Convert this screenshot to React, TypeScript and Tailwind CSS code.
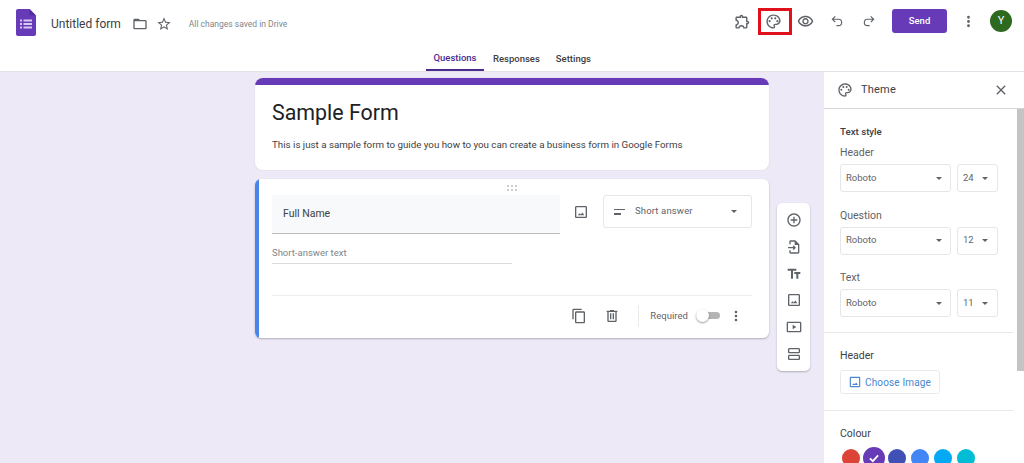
import type { ReactNode } from "react";

const paths = {
  folder: "M20 6h-8l-2-2H4c-1.1 0-1.99.9-1.99 2L2 18c0 1.1.9 2 2 2h16c1.1 0 2-.9 2-2V8c0-1.1-.9-2-2-2zm0 12H4V8h16v10z",
  star: "M22 9.24l-7.19-.62L12 2 9.19 8.63 2 9.24l5.46 4.73L5.82 21 12 17.27 18.18 21l-1.63-7.03L22 9.24zM12 15.4l-3.76 2.27 1-4.28-3.32-2.88 4.38-.38L12 6.1l1.71 4.04 4.38.38-3.32 2.88 1 4.28L12 15.4z",
  addon: "M10.5 4.5c.28 0 .5.22.5.5v2h6v6h2c.28 0 .5.22.5.5s-.22.5-.5.5h-2v6h-2.12c-.68-1.75-2.39-3-4.38-3s-3.7 1.25-4.38 3H4v-2.12c1.75-.68 3-2.39 3-4.38 0-1.99-1.24-3.7-2.99-4.38L4 7h6V5c0-.28.22-.5.5-.5m0-2C9.12 2.5 8 3.62 8 5H4c-1.1 0-1.99.9-1.99 2v3.8h.29c1.49 0 2.7 1.21 2.7 2.7s-1.21 2.7-2.7 2.7H2V20c0 1.1.9 2 2 2h3.8v-.3c0-1.49 1.21-2.7 2.7-2.7s2.7 1.21 2.7 2.7v.3H17c1.1 0 2-.9 2-2v-4c1.38 0 2.5-1.12 2.5-2.5S20.38 11 19 11V7c0-1.1-.9-2-2-2h-4c0-1.38-1.12-2.5-2.5-2.5z",
  palette: "M12 22C6.49 22 2 17.51 2 12S6.49 2 12 2s10 4.04 10 9c0 3.31-2.69 6-6 6h-1.77c-.28 0-.5.22-.5.5 0 .12.05.23.13.33.41.47.64 1.06.64 1.67A2.5 2.5 0 0 1 12 22zm0-18c-4.41 0-8 3.59-8 8s3.59 8 8 8c.28 0 .5-.22.5-.5a.54.54 0 0 0-.14-.35c-.41-.46-.63-1.05-.63-1.65a2.5 2.5 0 0 1 2.5-2.5H16c2.21 0 4-1.79 4-4 0-3.86-3.59-7-8-7zM6.5 10a1.5 1.5 0 1 0 0 3 1.5 1.5 0 0 0 0-3zM9.5 6a1.5 1.5 0 1 0 0 3 1.5 1.5 0 0 0 0-3zM14.5 6a1.5 1.5 0 1 0 0 3 1.5 1.5 0 0 0 0-3zM17.5 10a1.5 1.5 0 1 0 0 3 1.5 1.5 0 0 0 0-3z",
  eye: "M12 6c3.79 0 7.17 2.13 8.82 5.5C19.17 14.87 15.79 17 12 17s-7.17-2.13-8.82-5.5C4.83 8.13 8.21 6 12 6m0-2C7 4 2.73 7.11 1 11.5 2.73 15.89 7 19 12 19s9.27-3.11 11-7.5C21.27 7.11 17 4 12 4zm0 5c1.38 0 2.5 1.12 2.5 2.5S13.38 14 12 14s-2.5-1.12-2.5-2.5S10.62 9 12 9m0-2c-2.48 0-4.5 2.02-4.5 4.5S9.52 16 12 16s4.5-2.02 4.5-4.5S14.48 7 12 7z",
  close: "M19 6.41 17.59 5 12 10.59 6.41 5 5 6.41 10.59 12 5 17.59 6.41 19 12 13.41 17.59 19 19 17.59 13.41 12z",
  image: "M19 5v14H5V5h14m0-2H5c-1.1 0-2 .9-2 2v14c0 1.1.9 2 2 2h14c1.1 0 2-.9 2-2V5c0-1.1-.9-2-2-2zM14.14 12.86l-2.5 3-1.64-1.9L7 17h10z",
  copy: "M16 1H4c-1.1 0-2 .9-2 2v14h2V3h12V1zm3 4H8c-1.1 0-2 .9-2 2v14c0 1.1.9 2 2 2h11c1.1 0 2-.9 2-2V7c0-1.1-.9-2-2-2zm0 16H8V7h11v14z",
  trash: "M15 4V3H9v1H4v2h1v13c0 1.1.9 2 2 2h10c1.1 0 2-.9 2-2V6h1V4h-5zm2 15H7V6h10v13zM9 8h2v9H9zm4 0h2v9h-2z",
  add: "M13 7h-2v4H7v2h4v4h2v-4h4v-2h-4V7zm-1-5C6.48 2 2 6.48 2 12s4.48 10 10 10 10-4.48 10-10S17.52 2 12 2zm0 18c-4.41 0-8-3.59-8-8s3.59-8 8-8 8 3.59 8 8-3.59 8-8 8z",
  importFile: "M14 2H7c-1.1 0-2 .9-2 2v4h2V4h6v5h5v11H7v-3H5v3c0 1.1.9 2 2 2h11c1.1 0 2-.9 2-2V8l-6-6zM11.5 9.5 10.1 10.9 11.2 12H3v2h8.2l-1.1 1.1 1.4 1.4L15 13z",
  title: "M2.5 4v3h5v12h3V7h5V4h-13zm19 5h-9v3h3v7h3v-7h3V9z",
  video: "M21 4H3c-1.1 0-2 .9-2 2v12c0 1.1.9 2 2 2h18c1.1 0 2-.9 2-2V6c0-1.1-.9-2-2-2zm0 14H3V6h18v12zM10 8.5v7l5.5-3.5z",
  section: "M19 3H5c-1.1 0-2 .9-2 2v4c0 1.1.9 2 2 2h14c1.1 0 2-.9 2-2V5c0-1.1-.9-2-2-2zm0 6H5V5h14v4zM19 13H5c-1.1 0-2 .9-2 2v4c0 1.1.9 2 2 2h14c1.1 0 2-.9 2-2v-4c0-1.1-.9-2-2-2zm0 6H5v-4h14v4z",
  undo: "M8.3 3.3 9.7 4.7 6.4 8H14.5a6.5 6.5 0 0 1 0 13H11v-2h3.5a4.5 4.5 0 0 0 0-9H6.4l3.3 3.3-1.4 1.4L2.6 9z",
  redo: "M15.7 3.3 14.3 4.7 17.6 8H9.5a6.5 6.5 0 0 0 0 13H13v-2H9.5a4.5 4.5 0 0 1 0-9h8.1l-3.3 3.3 1.4 1.4L21.4 9z",
  more: "M12 8a2 2 0 1 0 0-4 2 2 0 0 0 0 4zm0 2a2 2 0 1 0 0 4 2 2 0 0 0 0-4zm0 6a2 2 0 1 0 0 4 2 2 0 0 0 0-4z",
};

function Icon({ d, className }: { d: string; className: string }) {
  return (
    <svg viewBox="0 0 24 24" fill="currentColor" className={className}>
      <path d={d} />
    </svg>
  );
}

function Caret() {
  return <span className="h-0 w-0 border-x-[3px] border-t-[3px] border-x-transparent border-t-[#5f6368]" />;
}

function FontRow({ label, size }: { label: string; size: string }) {
  return (
    <div>
      <div className="h-[18px] text-[10.5px] leading-[18px] text-[#5f6368]">{label}</div>
      <div className="mt-[2px] flex gap-[6px]">
        <div className="flex h-[28px] w-[111px] items-center justify-between rounded-[3px] border border-[#e6e6e8] pl-[5px] pr-[8px] text-[9.5px] text-[#5f6368]">
          Roboto
          <Caret />
        </div>
        <div className="flex h-[28px] w-[41px] items-center justify-between rounded-[3px] border border-[#e6e6e8] pl-[5px] pr-[9px] text-[9.5px] text-[#5f6368]">
          {size}
          <Caret />
        </div>
      </div>
    </div>
  );
}

function Section({ children, className }: { children: ReactNode; className: string }) {
  return <div className={`border-b border-[#e8e8e8] pl-[16px] ${className}`}>{children}</div>;
}

export default function App() {
  return (
    <div className="flex h-[463px] w-[1024px] flex-col overflow-hidden bg-[#ede9f7] font-['Roboto',sans-serif]">
      <header className="h-[72px] shrink-0 border-b border-[#e3e1e8] bg-white">
        <div className="flex h-[42px] items-center pl-[16px] pr-[12px]">
          <svg viewBox="0 0 20 27" className="mt-[3px] h-[27px] w-[20px] shrink-0">
            <path d="M2 0h11.5L20 6.5V25a2 2 0 0 1-2 2H2a2 2 0 0 1-2-2V2a2 2 0 0 1 2-2z" fill="#673ab7" />
            <path d="M13.5 0 20 6.5h-5a1.5 1.5 0 0 1-1.5-1.5z" fill="#512da8" />
            <path d="M4 10.5h2v2H4zM7.5 10.5H16v2H7.5zM4 14h2v2H4zM7.5 14H16v2H7.5zM4 17.5h2v2H4zM7.5 17.5H16v2H7.5z" fill="#d9c9f2" />
          </svg>
          <div className="mt-[6px] flex items-center">
            <span className="ml-[15px] text-[12px] text-[#3c4043]">Untitled form</span>
            <Icon d={paths.folder} className="ml-[11px] h-[16px] w-[16px] text-[#5f6368]" />
            <Icon d={paths.star} className="ml-[8px] h-[16px] w-[16px] text-[#5f6368]" />
            <span className="ml-[17px] text-[8.5px] text-[#80868b]">All changes saved in Drive</span>
          </div>
          <div className="ml-auto flex items-center">
            <Icon d={paths.addon} className="h-[17px] w-[17px] text-[#5f6368]" />
            <div className="ml-[7px] flex h-[27px] w-[34px] items-center justify-center border-[3px] border-[#e0101c] pr-[4px]">
              <Icon d={paths.palette} className="h-[17px] w-[17px] text-[#5f6368]" />
            </div>
            <Icon d={paths.eye} className="ml-[5px] h-[17px] w-[17px] text-[#5f6368]" />
            <Icon d={paths.undo} className="ml-[16px] h-[14px] w-[14px] text-[#5f6368]" />
            <Icon d={paths.redo} className="ml-[18px] h-[14px] w-[14px] text-[#5f6368]" />
            <button className="ml-[16px] h-[24px] w-[55px] rounded-[3px] bg-[#673ab7] text-[9.5px] font-medium text-white">Send</button>
            <Icon d={paths.more} className="ml-[13px] h-[17px] w-[17px] text-[#5f6368]" />
            <div className="ml-[13px] flex h-[22px] w-[22px] items-center justify-center rounded-full bg-[#2d6a1f] text-[11px] text-white">Y</div>
          </div>
        </div>
        <nav className="ml-[426px] flex h-[29px] gap-[9px] text-[9.5px] text-[#3c4043]">
          <div className="flex w-[58px] flex-col items-center justify-end">
            <span className="mb-[4px] font-medium text-[#4b2a8f]">Questions</span>
            <span className="h-[2px] w-full bg-[#4b2a8f]" />
          </div>
          <span className="pt-[10px] font-medium">Responses</span>
          <span className="ml-[7px] pt-[10px] font-medium">Settings</span>
        </nav>
      </header>
      <div className="flex min-h-0 flex-1">
        <main className="flex flex-1 gap-[8px] pl-[255px] pt-[6px]">
          <div className="w-[514px]">
            <section className="h-[92px] overflow-hidden rounded-[8px] bg-white shadow-[0_0_0_1px_#e6e3ee]">
              <div className="h-[7px] bg-[#673ab7]" />
              <h1 className="ml-[17px] mt-[14px] text-[21.4px] leading-[28px] text-[#202124]">Sample Form</h1>
              <p className="ml-[17px] mt-[11px] text-[9.75px] leading-[14px] text-[#3c4043]">
                This is just a sample form to guide you how to you can create a business form in Google Forms
              </p>
            </section>
            <section className="mt-[9px] flex h-[159px] overflow-hidden rounded-[6px] bg-white shadow-[0_1px_2px_rgba(60,64,67,0.35)]">
              <div className="w-[4px] bg-[#4a86e8]" />
              <div className="flex-1 pl-[13px] pr-[17px]">
                <div className="flex h-[16px] items-start justify-center pt-[6px]">
                  <div className="grid grid-cols-3 gap-[2px]">
                    <span className="h-[2px] w-[2px] rounded-full bg-[#bdbdbd]" />
                    <span className="h-[2px] w-[2px] rounded-full bg-[#bdbdbd]" />
                    <span className="h-[2px] w-[2px] rounded-full bg-[#bdbdbd]" />
                    <span className="h-[2px] w-[2px] rounded-full bg-[#bdbdbd]" />
                    <span className="h-[2px] w-[2px] rounded-full bg-[#bdbdbd]" />
                    <span className="h-[2px] w-[2px] rounded-full bg-[#bdbdbd]" />
                  </div>
                </div>
                <div className="flex items-start">
                  <div className="flex h-[39px] w-[288px] items-center border-b border-[#bdbdbd] bg-[#f8f9fa] pl-[11px] text-[10.5px] text-[#3c4043]">Full Name</div>
                  <Icon d={paths.image} className="ml-[13px] mt-[9px] h-[16px] w-[16px] text-[#5f6368]" />
                  <div className="ml-[14px] flex h-[33px] w-[149px] items-center rounded-[3px] border border-[#e6e6e8] pl-[10px] pr-[14px] text-[9.5px] text-[#5f6368]">
                    <span className="flex w-[11px] flex-col gap-[3px]">
                      <span className="h-[1.5px] w-full bg-[#5f6368]" />
                      <span className="h-[1.5px] w-[7px] bg-[#5f6368]" />
                    </span>
                    <span className="ml-[10px] tracking-[0.15px]">Short answer</span>
                    <span className="ml-auto flex"><Caret /></span>
                  </div>
                </div>
                <div className="mt-[11px] h-[19px] w-[240px] border-b border-[#dadce0] text-[9.5px] leading-[16px] text-[#80868b]">Short-answer text</div>
                <div className="mt-[31px] flex h-[43px] items-center justify-end border-t border-[#eeeeee] pb-[3px]">
                  <Icon d={paths.copy} className="h-[16px] w-[16px] text-[#5f6368]" />
                  <Icon d={paths.trash} className="ml-[17px] h-[16px] w-[16px] text-[#5f6368]" />
                  <span className="ml-[18px] h-[22px] w-px bg-[#e8eaed]" />
                  <span className="ml-[11px] mt-[2px] text-[9.5px] tracking-[0.05px] text-[#5f6368]">Required</span>
                  <span className="relative ml-[8px] h-[7px] w-[24px] rounded-full bg-[#b5b5b5]">
                    <span className="absolute left-0 top-[-3px] h-[13px] w-[13px] rounded-full bg-white shadow-[0_1px_2px_rgba(0,0,0,0.4)]" />
                  </span>
                  <Icon d={paths.more} className="ml-[8px] mr-[8px] h-[16px] w-[16px] text-[#5f6368]" />
                </div>
              </div>
            </section>
          </div>
          <aside className="mt-[125px] flex h-[168px] w-[33px] flex-col items-center justify-between rounded-[5px] bg-white py-[9px] shadow-[0_1px_2px_rgba(60,64,67,0.35)]">
            <Icon d={paths.add} className="h-[16px] w-[16px] text-[#5f6368]" />
            <Icon d={paths.importFile} className="h-[16px] w-[16px] text-[#5f6368]" />
            <Icon d={paths.title} className="h-[16px] w-[16px] text-[#5f6368]" />
            <Icon d={paths.image} className="h-[16px] w-[16px] text-[#5f6368]" />
            <Icon d={paths.video} className="h-[16px] w-[16px] text-[#5f6368]" />
            <Icon d={paths.section} className="h-[16px] w-[16px] text-[#5f6368]" />
          </aside>
        </main>
        <aside className="flex w-[200px] shrink-0 flex-col bg-white">
          <div className="flex h-[37px] shrink-0 items-center border-b border-[#d5d5d8] pl-[13px] pr-[15px] text-[#3c4043]">
            <Icon d={paths.palette} className="h-[16px] w-[16px] text-[#5f6368]" />
            <span className="ml-[8px] text-[11px] tracking-[0.2px]">Theme</span>
            <Icon d={paths.close} className="ml-auto h-[16px] w-[16px] text-[#5f6368]" />
          </div>
          <div className="flex min-h-0 flex-1">
            <div className="min-w-0 flex-1 pr-[4px]">
              <Section className="h-[224px] pt-[15px]">
                <div className="h-[16px] text-[9.7px] font-medium leading-[16px] text-[#3c4043]">Text style</div>
                <div className="mt-[4px] flex flex-col gap-[14.5px]">
                  <FontRow label="Header" size="24" />
                  <FontRow label="Question" size="12" />
                  <FontRow label="Text" size="11" />
                </div>
              </Section>
              <Section className="h-[78px] pt-[15px]">
                <div className="h-[16px] text-[10.5px] leading-[16px] text-[#3c4043]">Header</div>
                <button className="mt-[6px] flex h-[24px] w-[100px] items-center rounded-[3px] border border-[#e8eaed] pl-[7px] text-[10px] tracking-[0.15px] text-[#4a86cf]">
                  <Icon d={paths.image} className="h-[14px] w-[14px]" />
                  <span className="ml-[3px]">Choose Image</span>
                </button>
              </Section>
              <div className="pl-[16px] pt-[15px]">
                <div className="h-[16px] text-[10.5px] leading-[16px] text-[#3c4043]">Colour</div>
                <div className="mt-[5px] flex items-start pl-[2px]">
                  <span className="mt-[2px] h-[18px] w-[18px] rounded-full bg-[#db4437]" />
                  <span className="ml-[3px] mt-0 flex h-[22px] w-[22px] items-center justify-center rounded-full bg-[#673ab7] text-white">
                    <svg viewBox="0 0 24 24" className="h-[14px] w-[14px]" fill="none" stroke="currentColor" strokeWidth="3">
                      <path d="M5 12.5 10 17.5 19 7.5" />
                    </svg>
                  </span>
                  <span className="ml-[3px] mt-[2px] h-[18px] w-[18px] rounded-full bg-[#3f51b5]" />
                  <span className="ml-[5px] mt-[2px] h-[18px] w-[18px] rounded-full bg-[#4285f4]" />
                  <span className="ml-[5px] mt-[2px] h-[18px] w-[18px] rounded-full bg-[#03a9f4]" />
                  <span className="ml-[5px] mt-[2px] h-[18px] w-[18px] rounded-full bg-[#00bcd4]" />
                </div>
              </div>
            </div>
            <div className="w-[7px] shrink-0">
              <div className="h-[262px] bg-[#c4c4c4]" />
            </div>
          </div>
        </aside>
      </div>
    </div>
  );
}
